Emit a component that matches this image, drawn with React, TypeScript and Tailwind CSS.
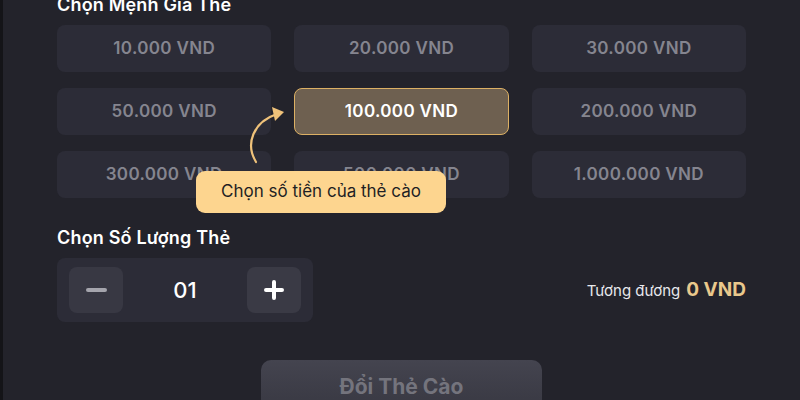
import React from "react";

const amounts = [
  "10.000 VND",
  "20.000 VND",
  "30.000 VND",
  "50.000 VND",
  "100.000 VND",
  "200.000 VND",
  "300.000 VND",
  "500.000 VND",
  "1.000.000 VND",
];

export default function App() {
  return (
    <div
      className="relative w-[800px] h-[400px] overflow-hidden bg-[#23232b] border-l-[3px] border-[#141418]"
      style={{ fontFamily: "Inter, 'Noto Sans', sans-serif" }}
    >
      <div className="pl-[54px] pr-[54px]">
        <div className="mt-[-6px] text-[18px] leading-[22px] font-semibold tracking-[0.01em] text-white">Chọn Mệnh Giá Thẻ</div>
        <div className="mt-[9px] grid grid-cols-3 gap-x-[23px] gap-y-[16px]">
          {amounts.map((a) => {
            const sel = a === "100.000 VND";
            return (
              <div
                key={a}
                className={
                  sel
                    ? "h-[47px] rounded-[8px] border-[1.5px] border-[#dcb064] bg-[#6e6050] flex items-center justify-center text-[17px] font-semibold tracking-[0.02em] text-white"
                    : "h-[47px] rounded-[8px] bg-[#2c2c37] flex items-center justify-center text-[17px] font-semibold tracking-[0.02em] text-[#85858f]"
                }
              >
                {a}
              </div>
            );
          })}
        </div>
        <div className="mt-[28px] text-[18px] leading-[24px] font-semibold tracking-[0.01em] text-white">Chọn Số Lượng Thẻ</div>
        <div className="mt-[8px] flex items-center justify-between">
          <div className="w-[256px] h-[64px] rounded-[8px] bg-[#2c2c37] px-[12px] flex items-center justify-between">
            <div className="w-[54px] h-[46px] rounded-[8px] bg-[#383843] flex items-center justify-center">
              <div className="w-[21px] h-[4px] rounded-full bg-[#a5a5ad]" />
            </div>
            <div className="text-[22px] font-medium text-white">01</div>
            <div className="w-[54px] h-[46px] rounded-[8px] bg-[#3a3a45] flex items-center justify-center">
              <svg width="22" height="22" viewBox="0 0 22 22">
                <path d="M11 3v16M3 11h16" stroke="white" strokeWidth="4" strokeLinecap="round" />
              </svg>
            </div>
          </div>
          <div className="flex items-baseline gap-[6px]">
            <span className="text-[15px] text-[#e8e8ec]">Tương đương</span>
            <span className="text-[19px] font-bold text-[#e9c88c]">0 VND</span>
          </div>
        </div>
        <div className="mt-[38px] flex justify-center">
          <div className="w-[281px] h-[56px] rounded-[10px] bg-gradient-to-b from-[#44444f] to-[#373741] flex items-start justify-center pt-[11px] text-[21px] font-bold text-[#74747d]">
            Đổi Thẻ Cào
          </div>
        </div>
      </div>

      <svg className="absolute left-[236px] top-[104px]" width="56" height="64" viewBox="0 0 56 64">
        <path d="M17 58 C 6 40, 14 18, 38 10" fill="none" stroke="#efc27a" strokeWidth="2.2" strokeLinecap="round" />
        <path d="M33 3 L45 8 L36 17 Z" fill="#efc27a" />
      </svg>

      <div className="absolute left-[193px] top-[171px] w-[250px] h-[42px] rounded-[9px] bg-[#fdd58f] flex items-center justify-center text-[17px] text-[#1f1f24]">
        Chọn số tiền của thẻ cào
      </div>
    </div>
  );
}
